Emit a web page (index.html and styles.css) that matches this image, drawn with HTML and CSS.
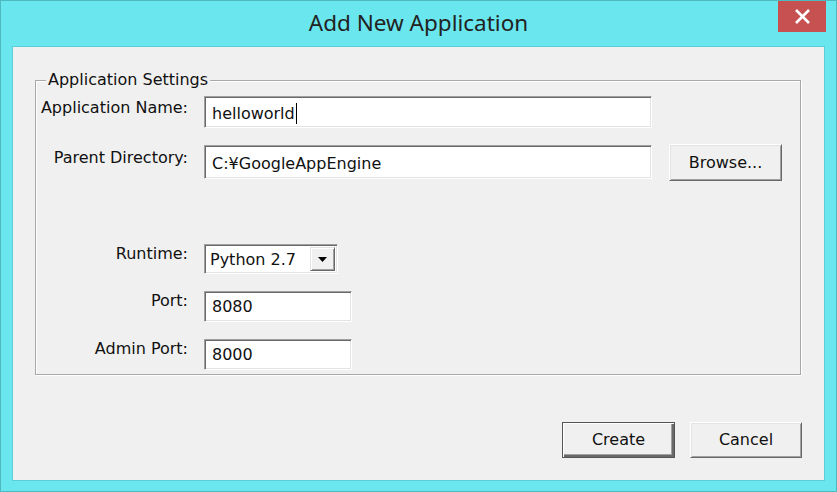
FILE: index.html
```html
<!DOCTYPE html>
<html>
<head>
<meta charset="utf-8">
<title>Add New Application</title>
<link rel="stylesheet" href="styles.css">
</head>
<body>
<div class="window">
  <div class="titlebar">
    <div class="title">Add New Application</div>
    <div class="close">
      <svg width="17" height="15" viewBox="0 0 17 15"><path d="M2 1 L15 14 M15 1 L2 14" stroke="#fff" stroke-width="2.6" fill="none"/></svg>
    </div>
  </div>
  <div class="client">
    <div class="group">
      <div class="legend">Application Settings</div>
      <div class="row r1">
        <div class="label">Application Name:</div>
        <div class="field tb-wide h32"><span class="val">helloworld</span><span class="caret"></span></div>
      </div>
      <div class="row r2">
        <div class="label l2">Parent Directory:</div>
        <div class="field tb-wide h34"><span class="val">C:¥GoogleAppEngine</span></div>
        <div class="btn browse">Browse...</div>
      </div>
      <div class="row r3">
        <div class="label">Runtime:</div>
        <div class="field combo"><span class="val">Python 2.7</span>
          <div class="drop"><svg width="9" height="5" viewBox="0 0 9 5"><path d="M0 0 H9 L4.5 5 Z" fill="#000"/></svg></div>
        </div>
      </div>
      <div class="row r4">
        <div class="label">Port:</div>
        <div class="field tb-small"><span class="val">8080</span></div>
      </div>
      <div class="row r5">
        <div class="label">Admin Port:</div>
        <div class="field tb-small"><span class="val">8000</span></div>
      </div>
    </div>
    <div class="actions">
      <div class="btn create">Create</div>
      <div class="btn cancel">Cancel</div>
    </div>
  </div>
</div>
</body>
</html>
```

FILE: styles.css
```css
* { box-sizing: border-box; }
html, body { margin: 0; padding: 0; }
body { width: 837px; height: 492px; overflow: hidden; font-family: "DejaVu Sans", sans-serif; }

.window {
  width: 837px;
  height: 492px;
  background: #6ae7ee;
  border: 1px solid #4fb9c0;
  display: flex;
  flex-direction: column;
}

.titlebar {
  position: relative;
  height: 45px;
  padding-top: 7px;
  text-align: center;
}
.title {
  font-family: "Noto Sans", "Open Sans", sans-serif;
  font-size: 22.5px;
  line-height: 30px;
  color: #222;
}
.close {
  position: absolute;
  top: 0;
  right: 10px;
  width: 48px;
  height: 31px;
  background: #c75050;
  display: flex;
  align-items: center;
  justify-content: center;
}

.client {
  margin: 0 11px 10px 11px;
  flex: 1;
  background: #f0f0f0;
  border: 1px solid #5ccfd6;
  display: flex;
  flex-direction: column;
  font-size: 16px;
  color: #000;
}

.group {
  margin: 33px 0 0 22px;
  width: 766px;
  height: 295px;
  border: 1px solid #a8a8a8;
  box-shadow: 1px 1px 0 #fff, inset 1px 1px 0 #fff;
  display: flex;
  flex-direction: column;
}
.legend {
  margin: -10px 0 0 10px;
  padding: 0 2px;
  line-height: 18px;
  height: 18px;
  background: #f0f0f0;
  align-self: flex-start;
  color: #111;
}

.row { display: flex; align-items: flex-start; }
.r1 { margin-top: 7px; }
.r2 { margin-top: 17px; }
.r3 { margin-top: 63px; }
.r4 { margin-top: 17px; }
.r5 { margin-top: 17px; }

.label {
  width: 152px;
  text-align: right;
  line-height: 20px;
  padding-top: 2px;
  margin-right: 16px;
  color: #111;
}
.l2 { padding-top: 3px; }
.r3 .label, .r4 .label, .r5 .label { padding-top: 0; }

.field {
  background: #fff;
  border: 1px solid;
  border-color: #a0a0a0 #fff #fff #a0a0a0;
  box-shadow: inset 1px 1px 0 #696969, inset -1px -1px 0 #e3e3e3;
  display: flex;
  align-items: center;
  padding: 3px 6px 0 7px;
  line-height: 20px;
  color: #111;
}
.tb-wide { width: 448px; }
.h32 { height: 32px; }
.h34 { height: 34px; }
.tb-small { width: 148px; height: 31px; padding-top: 1px; }
.caret {
  width: 1px;
  height: 21px;
  background: #000;
  margin-left: 1px;
}

.combo {
  width: 134px;
  height: 30px;
  padding: 1px 2px 0 5px;
  justify-content: space-between;
}
.drop {
  width: 25px;
  height: 24px;
  margin-top: -1px;
  background: #f0f0f0;
  border: 1px solid;
  border-color: #e3e3e3 #696969 #696969 #e3e3e3;
  box-shadow: inset 1px 1px 0 #fff, inset -1px -1px 0 #a0a0a0;
  display: flex;
  align-items: center;
  justify-content: center;
}

.btn {
  background: #f0f0f0;
  border: 1px solid;
  border-color: #fff #696969 #696969 #fff;
  box-shadow: inset 1px 1px 0 #e3e3e3, inset -1px -1px 0 #a0a0a0;
  display: flex;
  align-items: center;
  justify-content: center;
  color: #111;
  line-height: 20px;
}
.browse {
  margin-left: 17px;
  margin-top: -1px;
  width: 113px;
  height: 37px;
}

.actions {
  margin-top: 47px;
  margin-right: 22px;
  display: flex;
  justify-content: flex-end;
  gap: 15px;
}
.create {
  width: 113px;
  height: 36px;
  border: 1px solid #555;
  box-shadow: inset 1px 1px 0 #fff, inset -2px -2px 0 #696969, inset -3px -3px 0 #a0a0a0;
}
.cancel {
  width: 112px;
  height: 36px;
}
```
